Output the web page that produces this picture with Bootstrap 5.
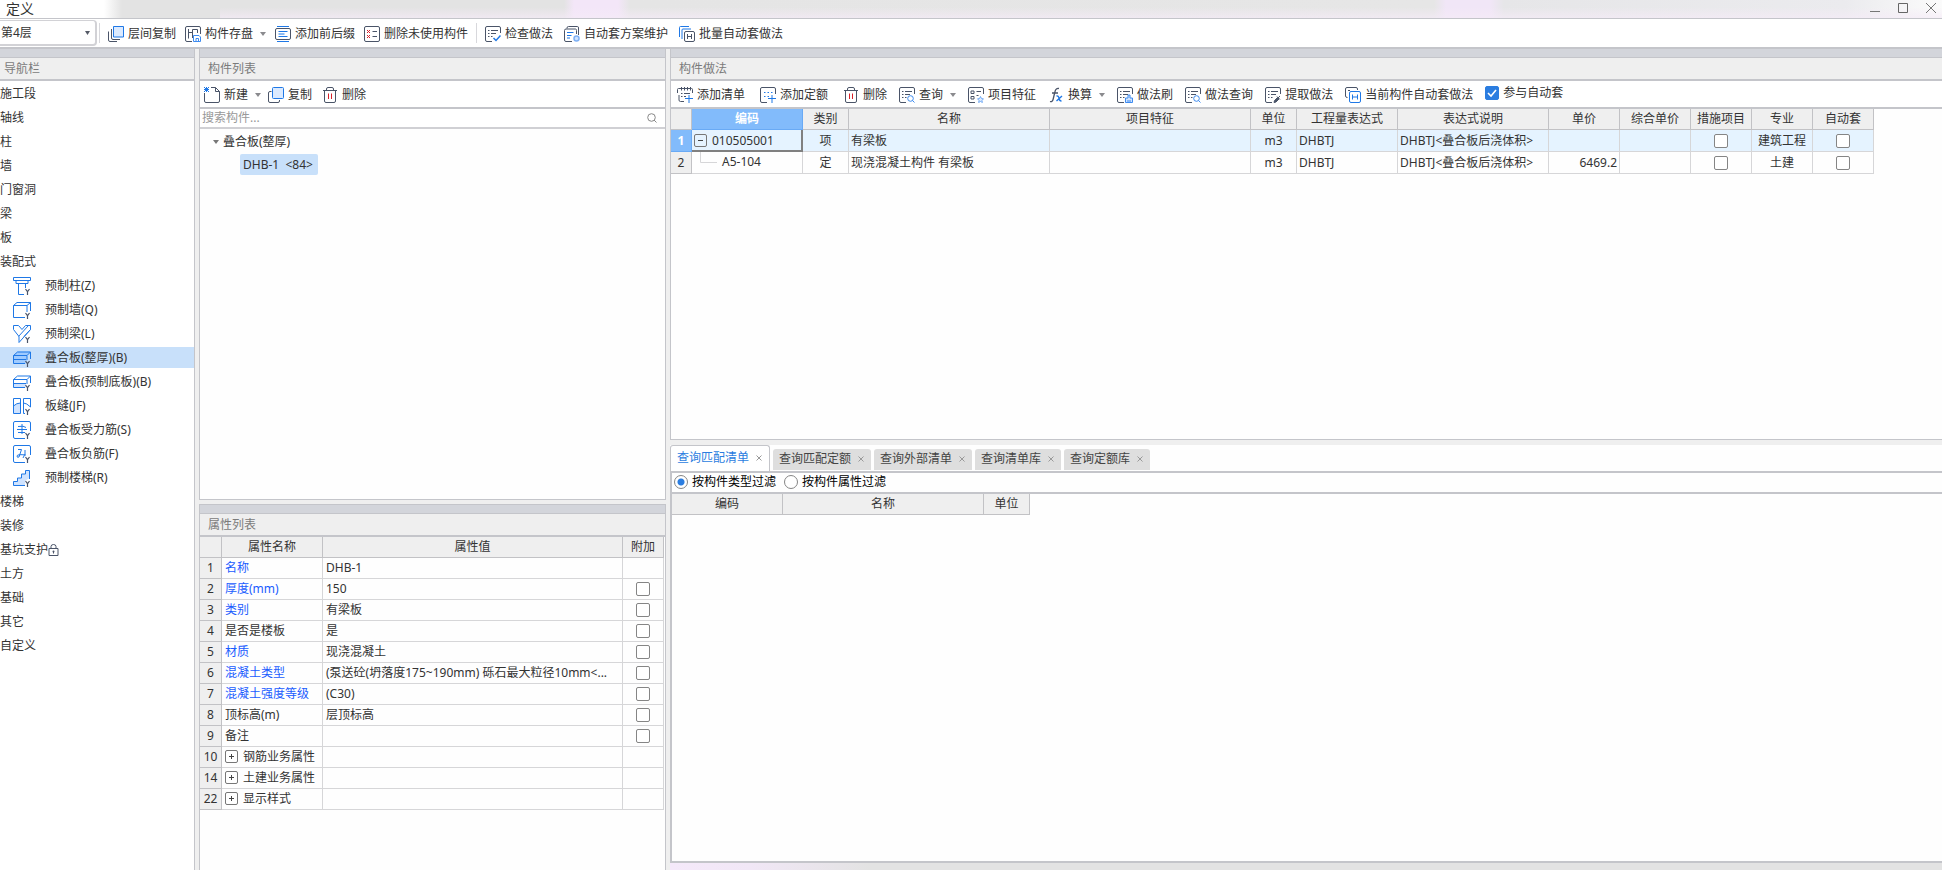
<!DOCTYPE html>
<html lang="zh-CN">
<head>
<meta charset="utf-8">
<meta name="viewport" content="width=device-width, initial-scale=1">
<title>定义</title>
<link href="https://cdn.jsdelivr.net/npm/bootstrap@5.3.0/dist/css/bootstrap.min.css" rel="stylesheet">
<script src="https://cdn.jsdelivr.net/npm/bootstrap@5.3.0/dist/js/bootstrap.bundle.min.js"></script>
<style>
:root{--line:#c4c5ca;--cell:#d6d6d8;--face:#efefef;--ink:#333;--blue:#1f78e6;--slate:#4a5468}
body{font:12px/18px "Noto Sans","Noto Sans CJK SC",sans-serif;color:var(--ink);background:#fefefe}
button{border:0;background:none;padding:0;color:inherit}
a{color:inherit;text-decoration:none}
.app{height:100vh;min-height:600px}
.titlebar{height:19px;border-bottom:1px solid var(--line);font-size:14px;line-height:17px;padding:0 6px 0 6px;
 background:linear-gradient(to bottom,transparent 40%,rgba(245,235,247,.7)) no-repeat 220px 0,
 linear-gradient(to right,#fff 104px,#e3e3e3 122px,#e3e3e3 564px,#f3e6f8 574px,#f3e6f8 618px,#e5e5e5 630px,#e6e6e6 1434px,#f1e6f7 1446px,#f1e6f7 1490px,#e6e6e8 1504px,#ebebee 95%,#fbfbfb)}
.win-btns{gap:18px}
.win-btns svg{width:10px;height:18px;display:block}
.mainbar{height:30px;border-bottom:2px solid var(--line);background:#fff}
.floor{width:97px;height:26px;border:2px solid #d2d2d6;border-width:1px 2px 2px 0;border-radius:0 4px 4px 0;appearance:none;color:inherit;padding:0 16px 0 1px;
 background:#fff url("data:image/svg+xml,%3Csvg xmlns='http://www.w3.org/2000/svg' width='5' height='4'%3E%3Cpath d='M0 0h5L2.5 4z' fill='%23555a66'/%3E%3C/svg%3E") no-repeat right 5px center}
.bar-group{gap:9px;padding-top:2px}
.bar-group-check{gap:11px}
.bar-split{border-left:1px solid #d8d8dc;height:20px}
.floor + .bar-split{margin-left:2px}
.tool{display:inline-flex;align-items:center;gap:4px;white-space:nowrap;line-height:18px}
.tool svg{width:16px;height:16px;flex:none}
.tool .drop{width:6px;height:4px;margin-left:3px;fill:#8a8a8e}
.tool-wide{margin-right:3px}
.workspace{background:var(--face);gap:4px;min-height:0}
.pane-nav{width:195px;border-right:1px solid var(--line);background:#fff}
.pane-mid{width:467px;gap:4px}
.pane-right{gap:5px;min-width:0}
.panel{border:1px solid var(--line);border-top:0;background:#fefefe;min-height:0;overflow:hidden}
.panel-top{flex:451 1 0}
.panel-props{flex:366 1 0;border-bottom:0}
.panel-work{flex:390 1 0;border-right:0}
.panel-query{flex:426 1 0;min-height:0}
.grip{height:9px;background:#d3d5db;border-bottom:1px solid var(--line)}
.grip-top{border-top:1px solid var(--line);height:10px}
.pane-head{height:23px;background:var(--face);border-bottom:2px solid var(--line);padding-left:8px;line-height:21px;color:#7b7b7b;font-size:12px;margin:0;font-weight:400}
.pane-nav .pane-head{padding-left:4px}
.nav-tree{padding-top:2px}
.nav-tree a{display:flex;align-items:center;height:21px;margin-bottom:3px}
.nav-tree .leaf{padding-left:13px;gap:14px}
.nav-tree .leaf svg{width:18px;height:18px;flex:none}
.nav-tree .active{background:#c8e0fa}
.lock{width:11px;height:12px}
.pane-tools{height:28px;border-bottom:2px solid var(--line);background:#fff;padding-top:2px}
.mid-tools{padding-left:4px;gap:7px}
.work-tools{padding-left:6px;gap:12px}
.find{height:20px;border-bottom:2px solid #d0d0d4;padding-right:8px;background:#fff}
.find input{border:0;outline:0;padding:0 2px;width:100%;height:18px;color:inherit}
.find input::placeholder{color:#999}
.find svg{width:10px;height:10px;flex:none}
.comp-tree{padding:1px 0 0 13px}
.comp-tree summary{height:24px;display:flex;align-items:center;gap:4px;list-style:none}
.comp-tree a{display:inline-block;margin-left:27px;height:21px;line-height:21px;padding:0 5px 0 3px;border-radius:2px;background:#c8e0fa}
.sheet{table-layout:fixed;border-collapse:separate;border-spacing:0;width:0}
.sheet th,.sheet td{height:21px;padding:0 2px;border-right:1px solid var(--cell);border-bottom:1px solid var(--cell);font-weight:400;line-height:18px;white-space:nowrap;overflow:hidden;text-overflow:ellipsis;vertical-align:middle}
.sheet thead th,.sheet tbody th{background:var(--face);border-color:#c2c2c5;text-align:center;padding:0}
.sheet .mid{text-align:center;padding:0}
.work td,.work tbody th{height:22px}
.work .pick td{background:#e5f3ff}
.work .pick th,.work thead .hot{background:#82bbfb;color:#fff;font-weight:700;border-color:#69aaf5}
.work .pick .focus{border-color:#808080;box-shadow:inset -1px -1px 0 #808080}
.props td{padding-left:3px}
.props .key{color:#1a5cff}
.c21{width:21px}.c22{width:22px}.c41{width:41px}.c46{width:46px}.c61{width:61px}.c71{width:71px}
.c101{width:101px}.c111{width:111px}.c151{width:151px}.c201{width:201px}.c300{width:300px}
.fold{width:13px;height:13px;vertical-align:-2px;margin-right:5px}
.twig{width:17px;height:21px;margin:0 5px 0 6px;vertical-align:middle}
.tick,.pick-one{appearance:none;width:14px;height:14px;border:1px solid #858585;border-radius:2px;background:#fff;margin:0;display:block;flex:none}
.sheet .tick{margin:0 auto}
.tick:checked{border-color:#2b7de0;background:#2b7de0 url("data:image/svg+xml,%3Csvg xmlns='http://www.w3.org/2000/svg' viewBox='0 0 12 12'%3E%3Cpath d='M2 6l3 3 5-6' fill='none' stroke='white' stroke-width='1.6'/%3E%3C/svg%3E")}
.pick-one{border-radius:50%}
.pick-one:checked{background:radial-gradient(circle,#2b7de0 3px,#fff 4px)}
.tabs{height:26px;gap:3px;background:#fefefe}
.tab{display:flex;align-items:center;gap:6px;height:21px;padding:0 6px;background:#dedede;border-radius:3px 3px 0 0;margin-bottom:1px;color:#444;line-height:20px}
.tab svg{width:8px;height:8px;stroke:#999}
.tab.active{height:26px;margin:0;padding:0 6px;background:#fff;border:1px solid var(--line);border-bottom:0;color:#2b7de0}
.tab-body{border:2px solid var(--line);border-right:0;background:#fefefe;min-height:0}
.filters{height:21px;border-bottom:2px solid var(--line);color:#000;padding-left:2px;gap:8px}
.filters label,.auto{display:flex;align-items:center;gap:4px}
.foot{height:7px;background:linear-gradient(to right,#f5e9fa,#f1e7f6 80px,#e3e3e3 200px)}
</style>
</head>
<body>
<svg class="d-none" xmlns="http://www.w3.org/2000/svg">
 <symbol id="drop" viewBox="0 0 6 4"><path d="M0 0h6L3 4z"/></symbol>
 <symbol id="i-copy2" viewBox="0 0 16 16" fill="none"><path d="M5.500.5h10v10.500h-10z" fill="#dbeaff" stroke="#1f78e6"/><path d="M3.500 3v9q0 1.500 1.500 1.500h7M.5 5.500V14q0 1.500 1.500 1.500h7" stroke="#4a5468"/></symbol>
 <symbol id="i-save" viewBox="0 0 16 16" fill="none" stroke="#4a5468"><path d="M7 15.500H2Q.5 15.500.5 14V2Q.5.5 2 .5h12q1.500 0 1.500 1.500v6M3.500 3v9.500M3.500 6.500h4M7.500 12V3.500h5V7"/><path d="M8.500 9.500h5.500l1.500 1.500v4.500h-7zM11 15v-2.500h2.500V15" stroke="#3d8bf0"/></symbol>
 <symbol id="i-affix" viewBox="0 0 16 16" fill="none"><path d="M2 .5h12M2 15.500h12M3.500 5.500h9M3.500 8h6M3.500 10.500h9" stroke="#1f78e6"/><path d="M2 2.500Q.5 2.500.5 4v8q0 1.500 1.500 1.500h12q1.500 0 1.500-1.500V4q0-1.500-1.500-1.500z" stroke="#4a5468"/></symbol>
 <symbol id="i-unused" viewBox="0 0 16 16" fill="none"><rect x=".5" y=".5" width="15" height="15" rx="1.500" stroke="#4a5468"/><path d="M3 4l3 3M6 4L3 7M3 9l3 3M6 9l-3 3" stroke="#d9202a"/><path d="M8.500 5.500H13M8.500 10.500H13" stroke="#4a5468"/></symbol>
 <symbol id="list" viewBox="0 0 16 16" fill="none" stroke="#4a5468"><path d="M7 15.500H2Q.5 15.500.5 14V2Q.5.5 2 .5h12q1.500 0 1.500 1.500v5M3 4.500h1.500M6 4.500h7M3 7.500h1.500M6 7.500h5M3 10.500h1.500M6 10.500h1.500"/></symbol>
 <symbol id="i-check" viewBox="0 0 16 16"><use href="#list"/><path d="M8.500 12l2.500 2.500 4.500-5" fill="none" stroke="#1f78e6" stroke-width="1.500"/></symbol>
 <symbol id="i-plan" viewBox="0 0 16 16" fill="none" stroke="#4a5468"><path d="M3 2.500V2Q3 .5 4.500.5h9q1 0 1 1.500v7M8 15.500H2q-1.500 0-1.500-1.500V4.500Q.5 3 2 3h9.500q1 0 1 1.500V8"/><path d="M3 6.500h6.500M3 9.500h4.500M3 12h3" stroke="#1f78e6"/><circle cx="12.500" cy="12.500" r="2.500" fill="#cfe3ff" stroke="#7fb1f5" stroke-width="1.500"/></symbol>
 <symbol id="i-batch" viewBox="0 0 16 16" fill="none"><path d="M.5 11V1.500q0-1 1-1H10M3 13V4q0-1 1-1h8" stroke="#1f78e6"/><rect x="5.500" y="5.500" width="10" height="10" rx="1.500" stroke="#4a5468"/><path d="M8.500 8v5M12.500 8v5M8.500 10.500h4" stroke="#4a5468"/></symbol>
 <symbol id="i-new" viewBox="0 0 16 16" fill="none"><path d="M7 .5h4.500l4 4V14q0 1.500-1.500 1.500H2Q.5 15.500.5 14V6M11.500.5v4h4" stroke="#4a5468"/><path d="M0 0l5 5M5 0L0 5M2.500 0v5M0 2.500h5" stroke="#1f78e6"/></symbol>
 <symbol id="i-copy" viewBox="0 0 16 16"><rect x="4.500" y=".5" width="11" height="11" rx="1" fill="#dbeaff" stroke="#1f78e6"/><path d="M3.500 4.500H2Q.5 4.500.5 6v8q0 1.500 1.500 1.500h8q1.500 0 1.500-1.500v-1" fill="none" stroke="#4a5468"/></symbol>
 <symbol id="i-del" viewBox="0 0 16 16" fill="none"><path d="M1 3.500h14M4.500 3V2Q4.500.5 6 .5h4q1.500 0 1.500 1.500v1M2.500 4v10q0 1.500 1.500 1.500h8q1.500 0 1.500-1.500V4" stroke="#4a5468"/><path d="M6.500 6.500V12M9.500 6.500V12" stroke="#d9202a"/></symbol>
 <symbol id="i-addlist" viewBox="0 0 16 16" fill="none"><path d="M7 14.500H3.500Q2 14.500 2 13V8M.5 6V2.500q0-1 1-1h13q1 0 1 1V6M4.500 0v3.500M7.500 0v3.500M10.500 0v3.500M13.500 0v3.500M4 6.500h1.500M7 6.500h6M4 9.500h1.500M7 9.500h2" stroke="#4a5468"/><path d="M8 11.500h8M12 8v8" stroke="#1f78e6"/></symbol>
 <symbol id="i-addquota" viewBox="0 0 16 16" fill="none"><path d="M7 15.500H2Q.5 15.500.5 14V2Q.5.5 2 .5h12q1.500 0 1.500 1.500v5" stroke="#4a5468"/><path d="M4 5.500h1.500M7.500 5.500H9M11 5.500h1.500M4 9.500h1.500M7.500 9.500H9M8 11.500h8M12 8v8" stroke="#1f78e6"/></symbol>
 <symbol id="i-find" viewBox="0 0 16 16"><use href="#list"/><circle cx="11.500" cy="11.500" r="2.800" fill="#fff" stroke="#3d8bf0"/><path d="M13.500 13.500l2 2" stroke="#3d8bf0"/></symbol>
 <symbol id="i-feature" viewBox="0 0 16 16" fill="none"><path d="M7 15.500H2Q.5 15.500.5 14V2Q.5.5 2 .5h12q1.500 0 1.500 1.500v5M3 4h3v2.500H3zM3 9.500h3V12H3zM8.500 4.500H13M8.500 8.500h2" stroke="#4a5468"/><path d="M12.500 9.500l1 2 2 .3-1.500 1.500.4 2.200-1.900-1-1.900 1 .4-2.200-1.500-1.500 2-.3z" fill="#dbeaff" stroke="#5c9df3" stroke-width=".8"/></symbol>
 <symbol id="i-fx" viewBox="0 0 16 16" fill="none"><path d="M2 14.500q2.500.8 3.200-2.500L7 4.500Q7.800.8 11 1.500M4 6h6" stroke="#4a5468" stroke-width="1.300"/><path d="M8.500 9q2-.5 2.500 2.300T13.500 14M14 9l-5.500 5" stroke="#1f78e6" stroke-width="1.400"/></symbol>
 <symbol id="i-brush" viewBox="0 0 16 16"><use href="#list"/><path d="M11 8h2v3h2.500v4.500h-7V11H11zM11 13v2M13 13v2" fill="#cfe3ff" stroke="#3d8bf0"/></symbol>
 <symbol id="i-extract" viewBox="0 0 16 16"><use href="#list"/><path d="M9 15.500l.5-2 3-3 1.500 1.500-3 3zM12 9.500l3 3M13 11l2-2" fill="#4a5468" stroke="#4a5468"/></symbol>
 <symbol id="i-auto" viewBox="0 0 16 16" fill="none"><path d="M2.500 10.500Q.5 10.500.5 9V2Q.5.5 2 .5h9q1.500 0 1.500 1.500v1M3 3.500h2" stroke="#4a5468"/><rect x="4.500" y="4.500" width="11" height="11" rx="1.500" stroke="#1f78e6"/><path d="M7.500 7.500v5M12.500 7.500v5M7.500 10h5" stroke="#1f78e6"/></symbol>
 <symbol id="y" viewBox="0 0 18 18"><path d="M12.500 12l2 2.700 2-2.700M14.500 14.500V18" fill="none" stroke="#4a5468" stroke-width="1.200"/></symbol>
 <symbol id="n-col" viewBox="0 0 18 18"><path d="M.5.5h17v3H.5zM3 4v2.500h12V4M5.500 7v10.500H11M12.500 7v4" fill="none" stroke="#1f78e6"/><use href="#y"/></symbol>
 <symbol id="n-wall" viewBox="0 0 18 18"><path d="M12 16.500H.5v-12h13.500V11M.5 4.500L4 1.500h13.500V10M14 4.500l3.500-3" fill="none" stroke="#1f78e6"/><use href="#y"/></symbol>
 <symbol id="n-beam" viewBox="0 0 18 18"><path d="M.5.500h5L9 4.500l3.500-4h5v4L6 17.500v-6L.5 4.500zM5.500 11.500L15 1M17.500 4.500L11 11.500" fill="none" stroke="#1f78e6"/><use href="#y"/></symbol>
 <symbol id="n-slab" viewBox="0 0 18 18"><path d="M.5 6.500l4-4h13L14 6.500v8H.500z" fill="#9fcbff"/><path d="M12 14.500H.5v-8L4.500 3h13v7M.5 6.500H14V11M.5 10.500H13M14 6.500L17.500 3" fill="none" stroke="#1f78e6"/><use href="#y"/></symbol>
 <symbol id="n-slab2" viewBox="0 0 18 18"><path d="M.5 10.500H13v4H.5z" fill="#cfe3ff"/><path d="M12 14.500H.5v-8L4.500 3h13v7M.5 6.500H14V11M.5 10.500H13M14 6.500L17.500 3" fill="none" stroke="#1f78e6"/><use href="#y"/></symbol>
 <symbol id="n-seam" viewBox="0 0 18 18"><path d="M.5 9q3-3 7-3v10.500h-7z" fill="#cfe3ff"/><path d="M.5 1.500h7v15h-7zM12 16.500h-1.500v-15h7V10M.5 9q3-3 7-3M10.500 6q3 0 7 4" fill="none" stroke="#1f78e6"/><use href="#y"/></symbol>
 <symbol id="n-rebar" viewBox="0 0 18 18"><path d="M12 17.500H2Q.5 17.500.5 16V2Q.5.5 2 .5h14q1.500 0 1.500 1.500v8M5 5.500q6-1 8 1M4 8.500h10M5 11.500h7M9 3v10" fill="none" stroke="#1f78e6"/><use href="#y"/></symbol>
 <symbol id="n-rebar2" viewBox="0 0 18 18"><path d="M12 17.500H2Q.5 17.500.5 16V2Q.5.5 2 .5h14q1.500 0 1.500 1.500v8M5 4.500h3.500L6 12q-2 1-2-1t9-1M12 5v4l-2 4" fill="none" stroke="#1f78e6"/><use href="#y"/></symbol>
 <symbol id="n-stair" viewBox="0 0 18 18"><path d="M12 16.500H.5v-4h4V9h4V5h4V1.500h4V9L12 12z" fill="#cfe3ff"/><path d="M12 16.500H.5v-4h4V9h4V5h4V1.500h4V10" fill="none" stroke="#1f78e6"/><use href="#y"/></symbol>
 <symbol id="plus" viewBox="0 0 13 13"><rect x=".5" y=".5" width="12" height="12" rx="1.500" fill="#fff" stroke="#777"/><path d="M4 6.500h5M6.500 4v5" stroke="#444"/></symbol>
 <symbol id="minus" viewBox="0 0 13 13"><rect x=".5" y=".5" width="12" height="12" rx="1.500" fill="none" stroke="#777"/><path d="M4 6.500h5" stroke="#444"/></symbol>
 <symbol id="x" viewBox="0 0 8 8"><path d="M1.500 1.500l5 5M6.500 1.500l-5 5"/></symbol>
</svg>

<div class="app d-flex flex-column overflow-hidden">
 <header class="titlebar d-flex justify-content-between align-items-start flex-shrink-0">
  <span>定义</span>
  <div class="win-btns d-flex">
   <button type="button" aria-label="最小化"><svg viewBox="0 0 10 18"><path d="M0 11.500h10" stroke="#777"/></svg></button>
   <button type="button" aria-label="最大化"><svg viewBox="0 0 10 18"><path d="M.5 3.500h9v9h-9z" fill="none" stroke="#666"/></svg></button>
   <button type="button" aria-label="关闭"><svg viewBox="0 0 10 18"><path d="M0 3l10 10M10 3L0 13" stroke="#777"/></svg></button>
  </div>
 </header>

 <div class="mainbar d-flex align-items-center flex-shrink-0">
  <select class="floor" aria-label="楼层"><option>第4层</option></select>
  <div class="bar-split"></div>
  <div class="bar-group d-flex px-2">
   <button type="button" class="tool"><svg><use href="#i-copy2"/></svg>层间复制</button>
   <button type="button" class="tool"><svg><use href="#i-save"/></svg>构件存盘<svg class="drop"><use href="#drop"/></svg></button>
   <button type="button" class="tool"><svg><use href="#i-affix"/></svg>添加前后缀</button>
   <button type="button" class="tool"><svg><use href="#i-unused"/></svg>删除未使用构件</button>
  </div>
  <div class="bar-split"></div>
  <div class="bar-group bar-group-check d-flex ps-2">
   <button type="button" class="tool"><svg><use href="#i-check"/></svg>检查做法</button>
   <button type="button" class="tool"><svg><use href="#i-plan"/></svg>自动套方案维护</button>
   <button type="button" class="tool"><svg><use href="#i-batch"/></svg>批量自动套做法</button>
  </div>
 </div>

 <main class="workspace d-flex flex-grow-1">
  <nav class="pane-nav flex-shrink-0 overflow-hidden">
   <div class="grip"></div>
   <h2 class="pane-head">导航栏</h2>
   <div class="nav-tree">
    <a href="#">施工段</a><a href="#">轴线</a><a href="#">柱</a><a href="#">墙</a><a href="#">门窗洞</a><a href="#">梁</a><a href="#">板</a><a href="#">装配式</a>
    <a href="#" class="leaf"><svg><use href="#n-col"/></svg>预制柱(Z)</a>
    <a href="#" class="leaf"><svg><use href="#n-wall"/></svg>预制墙(Q)</a>
    <a href="#" class="leaf"><svg><use href="#n-beam"/></svg>预制梁(L)</a>
    <a href="#" class="leaf active" aria-current="true"><svg><use href="#n-slab"/></svg>叠合板(整厚)(B)</a>
    <a href="#" class="leaf"><svg><use href="#n-slab2"/></svg>叠合板(预制底板)(B)</a>
    <a href="#" class="leaf"><svg><use href="#n-seam"/></svg>板缝(JF)</a>
    <a href="#" class="leaf"><svg><use href="#n-rebar"/></svg>叠合板受力筋(S)</a>
    <a href="#" class="leaf"><svg><use href="#n-rebar2"/></svg>叠合板负筋(F)</a>
    <a href="#" class="leaf"><svg><use href="#n-stair"/></svg>预制楼梯(R)</a>
    <a href="#">楼梯</a><a href="#">装修</a>
    <a href="#">基坑支护<svg class="lock" viewBox="0 0 11 12"><path d="M1 4.500h9v7H1zM3 4V2.500Q3 .5 5.500.5T8 2.500V4M5.500 7.500v2" fill="none" stroke="#4a5468"/><circle cx="5.500" cy="7.500" r="1" fill="#4a5468"/></svg></a>
    <a href="#">土方</a><a href="#">基础</a><a href="#">其它</a><a href="#">自定义</a>
   </div>
  </nav>

  <section class="pane-mid d-flex flex-column flex-shrink-0">
   <div class="panel panel-top">
    <div class="grip"></div>
    <h2 class="pane-head">构件列表</h2>
    <div class="pane-tools mid-tools d-flex align-items-center">
     <button type="button" class="tool"><svg><use href="#i-new"/></svg>新建<svg class="drop"><use href="#drop"/></svg></button>
     <button type="button" class="tool tool-wide"><svg><use href="#i-copy"/></svg>复制</button>
     <button type="button" class="tool"><svg><use href="#i-del"/></svg>删除</button>
    </div>
    <div class="find d-flex align-items-center">
     <input type="text" placeholder="搜索构件..." aria-label="搜索构件">
     <svg viewBox="0 0 10 10"><circle cx="4.500" cy="4.500" r="3.800" fill="none" stroke="#888"/><path d="M7 7l2.500 2.500" stroke="#888"/></svg>
    </div>
    <details class="comp-tree" open>
     <summary><svg width="6" height="4" fill="#777"><use href="#drop"/></svg>叠合板(整厚)</summary>
     <a href="#">DHB-1&nbsp; &lt;84&gt;</a>
    </details>
   </div>

   <div class="panel panel-props">
    <div class="grip grip-top"></div>
    <h2 class="pane-head">属性列表</h2>
    <table class="sheet props">
     <colgroup><col class="c22"><col class="c101"><col class="c300"><col class="c41"></colgroup>
     <thead><tr><th></th><th>属性名称</th><th>属性值</th><th>附加</th></tr></thead>
     <tbody>
      <tr><th>1</th><td class="key">名称</td><td>DHB-1</td><td></td></tr>
      <tr><th>2</th><td class="key">厚度(mm)</td><td>150</td><td class="mid"><input class="tick" type="checkbox" aria-label="附加 厚度"></td></tr>
      <tr><th>3</th><td class="key">类别</td><td>有梁板</td><td class="mid"><input class="tick" type="checkbox" aria-label="附加 类别"></td></tr>
      <tr><th>4</th><td>是否是楼板</td><td>是</td><td class="mid"><input class="tick" type="checkbox" aria-label="附加 是否是楼板"></td></tr>
      <tr><th>5</th><td class="key">材质</td><td>现浇混凝土</td><td class="mid"><input class="tick" type="checkbox" aria-label="附加 材质"></td></tr>
      <tr><th>6</th><td class="key">混凝土类型</td><td>(泵送砼(坍落度175~190mm) 砾石最大粒径10mm&lt;...</td><td class="mid"><input class="tick" type="checkbox" aria-label="附加 混凝土类型"></td></tr>
      <tr><th>7</th><td class="key">混凝土强度等级</td><td>(C30)</td><td class="mid"><input class="tick" type="checkbox" aria-label="附加 混凝土强度等级"></td></tr>
      <tr><th>8</th><td>顶标高(m)</td><td>层顶标高</td><td class="mid"><input class="tick" type="checkbox" aria-label="附加 顶标高"></td></tr>
      <tr><th>9</th><td>备注</td><td></td><td class="mid"><input class="tick" type="checkbox" aria-label="附加 备注"></td></tr>
      <tr><th>10</th><td><svg class="fold"><use href="#plus"/></svg>钢筋业务属性</td><td></td><td></td></tr>
      <tr><th>14</th><td><svg class="fold"><use href="#plus"/></svg>土建业务属性</td><td></td><td></td></tr>
      <tr><th>22</th><td><svg class="fold"><use href="#plus"/></svg>显示样式</td><td></td><td></td></tr>
     </tbody>
    </table>
   </div>
  </section>

  <section class="pane-right d-flex flex-column flex-grow-1">
   <div class="panel panel-work">
    <div class="grip"></div>
    <h2 class="pane-head">构件做法</h2>
    <div class="pane-tools work-tools d-flex align-items-center">
     <button type="button" class="tool tool-wide"><svg><use href="#i-addlist"/></svg>添加清单</button>
     <button type="button" class="tool tool-wide"><svg><use href="#i-addquota"/></svg>添加定额</button>
     <button type="button" class="tool"><svg><use href="#i-del"/></svg>删除</button>
     <button type="button" class="tool"><svg><use href="#i-find"/></svg>查询<svg class="drop"><use href="#drop"/></svg></button>
     <button type="button" class="tool"><svg><use href="#i-feature"/></svg>项目特征</button>
     <button type="button" class="tool"><svg><use href="#i-fx"/></svg>换算<svg class="drop"><use href="#drop"/></svg></button>
     <button type="button" class="tool"><svg><use href="#i-brush"/></svg>做法刷</button>
     <button type="button" class="tool"><svg><use href="#i-find"/></svg>做法查询</button>
     <button type="button" class="tool"><svg><use href="#i-extract"/></svg>提取做法</button>
     <button type="button" class="tool"><svg><use href="#i-auto"/></svg>当前构件自动套做法</button>
     <label class="auto pb-1"><input class="tick" type="checkbox" checked>参与自动套</label>
    </div>
    <table class="sheet work">
     <colgroup><col class="c21"><col class="c111"><col class="c46"><col class="c201"><col class="c201"><col class="c46"><col class="c101"><col class="c151"><col class="c71"><col class="c71"><col class="c61"><col class="c61"><col class="c61"></colgroup>
     <thead><tr><th></th><th class="hot">编码</th><th>类别</th><th>名称</th><th>项目特征</th><th>单位</th><th>工程量表达式</th><th>表达式说明</th><th>单价</th><th>综合单价</th><th>措施项目</th><th>专业</th><th>自动套</th></tr></thead>
     <tbody>
      <tr class="pick"><th>1</th><td class="focus"><svg class="fold"><use href="#minus"/></svg>010505001</td><td class="mid">项</td><td>有梁板</td><td></td><td class="mid">m3</td><td>DHBTJ</td><td>DHBTJ&lt;叠合板后浇体积&gt;</td><td></td><td></td><td class="mid"><input class="tick" type="checkbox" aria-label="措施项目 1"></td><td class="mid">建筑工程</td><td class="mid"><input class="tick" type="checkbox" aria-label="自动套 1"></td></tr>
      <tr><th>2</th><td><svg class="twig" viewBox="0 0 17 21"><path d="M.5 0v10.500H17" fill="none" stroke="#d6d6d8"/></svg>A5-104</td><td class="mid">定</td><td>现浇混凝土构件 有梁板</td><td></td><td class="mid">m3</td><td>DHBTJ</td><td>DHBTJ&lt;叠合板后浇体积&gt;</td><td class="text-end">6469.2</td><td></td><td class="mid"><input class="tick" type="checkbox" aria-label="措施项目 2"></td><td class="mid">土建</td><td class="mid"><input class="tick" type="checkbox" aria-label="自动套 2"></td></tr>
     </tbody>
    </table>
   </div>

   <div class="panel-query d-flex flex-column">
    <div class="tabs d-flex align-items-end flex-shrink-0" role="tablist">
     <button type="button" role="tab" class="tab active" aria-selected="true">查询匹配清单<svg><use href="#x"/></svg></button>
     <button type="button" role="tab" class="tab">查询匹配定额<svg><use href="#x"/></svg></button>
     <button type="button" role="tab" class="tab">查询外部清单<svg><use href="#x"/></svg></button>
     <button type="button" role="tab" class="tab">查询清单库<svg><use href="#x"/></svg></button>
     <button type="button" role="tab" class="tab">查询定额库<svg><use href="#x"/></svg></button>
    </div>
    <div class="tab-body flex-grow-1">
     <div class="filters d-flex align-items-center">
      <label><input class="pick-one" type="radio" name="filter" checked>按构件类型过滤</label>
      <label><input class="pick-one" type="radio" name="filter">按构件属性过滤</label>
     </div>
     <table class="sheet">
      <colgroup><col class="c111"><col class="c201"><col class="c46"></colgroup>
      <thead><tr><th>编码</th><th>名称</th><th>单位</th></tr></thead>
     </table>
    </div>
    <div class="foot flex-shrink-0"></div>
   </div>
  </section>
 </main>
</div>
</body>
</html>
